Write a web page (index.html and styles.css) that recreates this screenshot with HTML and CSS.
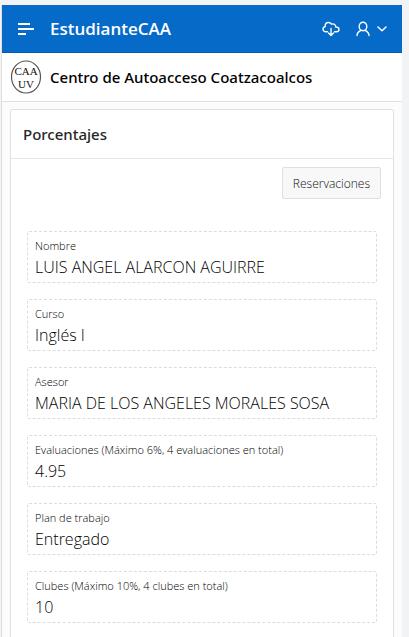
FILE: index.html
```
<!DOCTYPE html>
<html lang="es">
<head>
  <meta charset="UTF-8">
  <meta name="viewport" content="width=device-width, initial-scale=1">
  <title>EstudianteCAA - Porcentajes</title>
  <link rel="stylesheet" href="styles.css">
</head>
<body>
  <div class="app">
    <header class="header">
      <button type="button" class="icon-button" aria-label="Menú">
        <svg width="16" height="12" viewBox="0 0 16 12" fill="#fff">
          <path d="M0 0h12v2H0zM0 5h16v2H0zM0 10h8v2H0z"/>
        </svg>
      </button>
      <a class="app-name" href="index.html">EstudianteCAA</a>
      <button type="button" class="icon-button install" aria-label="Instalar">
        <svg width="18" height="16" viewBox="0 0 18 16" fill="none" stroke="#fff" stroke-width="1.4" stroke-linecap="round" stroke-linejoin="round">
          <path d="M5.500 10.800H4C2.200 10.800 1 9.700 1 8.200C1 6.700 2 5.800 3.300 5.500C2.700 3 4.400 1.500 6.400 1.500C8 1.500 8.900 2.200 9.500 3.200C11.700 2.200 13.900 3.600 13.700 6C15.900 5.900 17 7 17 8.500C17 9.900 15.800 10.800 14.200 10.800H12.500"/>
          <path d="M9 7.500V14.500M6.500 12L9 14.500L11.500 12"/>
        </svg>
      </button>
      <button type="button" class="icon-button" aria-label="Usuario">
        <svg width="14" height="16" viewBox="0 0 14 16" fill="none" stroke="#fff" stroke-width="1.400" stroke-linecap="round">
          <ellipse cx="7" cy="5.500" rx="3.800" ry="4.300"/>
          <path d="M1 14.500C1 11.800 2.500 10.400 5 9.300M13 14.500C13 11.800 11.500 10.400 9 9.300"/>
        </svg>
        <svg width="10" height="6" viewBox="0 0 10 6" fill="none" stroke="#fff" stroke-width="1.500" stroke-linecap="round" stroke-linejoin="round">
          <path d="M1 1L5 4.800L9 1"/>
        </svg>
      </button>
    </header>

    <div class="title-bar">
      <svg class="logo" width="32" height="34" viewBox="0 0 32 34">
        <ellipse cx="16" cy="17" rx="14.500" ry="16" fill="#fff" stroke="#555" stroke-width="1.200"/>
        <text x="16" y="15" text-anchor="middle">CAA</text>
        <text x="16" y="28" text-anchor="middle">UV</text>
      </svg>
      <h1>Centro de Autoacceso Coatzacoalcos</h1>
    </div>

    <main class="content">
      <section class="card">
        <h2>Porcentajes</h2>
        <div class="actions">
          <button type="button" class="btn">Reservaciones</button>
        </div>
        <dl class="fields">
          <div class="field">
            <dt>Nombre</dt>
            <dd>LUIS ANGEL ALARCON AGUIRRE</dd>
          </div>
          <div class="field">
            <dt>Curso</dt>
            <dd>Inglés I</dd>
          </div>
          <div class="field">
            <dt>Asesor</dt>
            <dd>MARIA DE LOS ANGELES MORALES SOSA</dd>
          </div>
          <div class="field">
            <dt>Evaluaciones (Máximo 6%, 4 evaluaciones en total)</dt>
            <dd>4.95</dd>
          </div>
          <div class="field">
            <dt>Plan de trabajo</dt>
            <dd>Entregado</dd>
          </div>
          <div class="field">
            <dt>Clubes (Máximo 10%, 4 clubes en total)</dt>
            <dd>10</dd>
          </div>
        </dl>
      </section>
    </main>
  </div>
</body>
</html>
```

FILE: styles.css
```
* {
  box-sizing: border-box;
}
body {
  margin: 0;
  padding: 5px 7px 0 1px;
  background: #f1f3f4;
  color: #262626;
  font-family: "Open Sans", "Noto Sans", sans-serif;
}
.app {
  background: #fcfcfc;
  border-left: 1px solid #e0e0e0;
}
.header {
  display: flex;
  align-items: center;
  height: 48px;
  padding: 0 15px 0 16px;
  background: #056ac8;
  border-bottom: 1px solid #045fb4;
}
.icon-button {
  display: flex;
  align-items: center;
  gap: 7px;
  padding: 0;
  border: none;
  background: none;
  cursor: pointer;
}
.app-name {
  margin-left: 16px;
  color: #fff;
  font-size: 17px;
  font-weight: 600;
  text-decoration: none;
}
.install {
  margin: 0 16px 0 auto;
}
.title-bar {
  display: flex;
  align-items: center;
  gap: 8px;
  height: 49px;
  padding: 0 8px;
  background: #fff;
  border-bottom: 1px solid #e0e0e0;
}
.logo text {
  font-family: "Liberation Serif", serif;
  font-size: 11px;
  fill: #111;
}
h1,
h2 {
  margin: 0;
  font-family: "Noto Sans", sans-serif;
  font-size: 15px;
  font-weight: 500;
  line-height: 24px;
}
h1 {
  color: #000;
}
h2 {
  padding: 12px;
  border-bottom: 1px solid #e8e8e8;
}
.content {
  padding: 7px 8px;
}
.card {
  background: #fff;
  border: 1px solid #e0e0e0;
  border-radius: 2px;
}
.actions {
  display: flex;
  justify-content: flex-end;
  padding: 8px 12px;
}
.btn {
  height: 32px;
  padding: 0 10px;
  background: #f8f8f8;
  border: 1px solid #dfdfdf;
  border-radius: 2px;
  color: #111;
  font-family: inherit;
  font-size: 12px;
  font-weight: 300;
  cursor: pointer;
}
.fields {
  display: flex;
  flex-direction: column;
  gap: 16px;
  margin: 0;
  padding: 24px 16px;
}
.field {
  padding: 7px 7px 3px;
  border: 1px dashed #dcdcdc;
  border-radius: 2px;
  color: #000;
  font-weight: 300;
}
dt {
  font-size: 11px;
  line-height: 14px;
}
dd {
  margin: 2px 0 0;
  font-size: 16px;
  line-height: 24px;
}
```
